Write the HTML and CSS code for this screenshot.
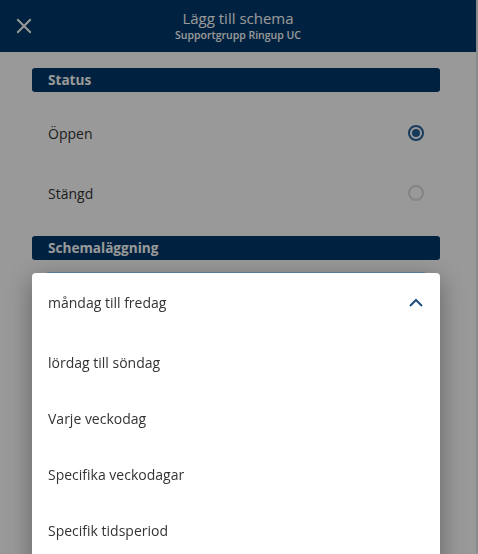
FILE: index.html
```html
<!DOCTYPE html>
<html lang="sv">
<head>
<meta charset="utf-8">
<title>Lägg till schema</title>
<link rel="stylesheet" href="styles.css">
</head>
<body>
<div class="page">
  <header class="topbar">
    <button class="close" aria-label="Stäng">
      <svg width="16" height="16" viewBox="0 0 16 16"><path d="M2 2 L14 14 M14 2 L2 14" stroke="#fff" stroke-width="2" stroke-linecap="square" fill="none"/></svg>
    </button>
    <div class="titles">
      <div class="title">Lägg till schema</div>
      <div class="subtitle">Supportgrupp Ringup UC</div>
    </div>
  </header>

  <main class="content">
    <section class="section">
      <h2 class="section-head">Status</h2>
      <div class="options">
        <label class="option"><span>Öppen</span><span class="radio checked"></span></label>
        <label class="option"><span>Stängd</span><span class="radio"></span></label>
      </div>
    </section>
    <section class="section">
      <h2 class="section-head">Schemaläggning</h2>
      <div class="field"></div>
    </section>
  </main>
</div>

<div class="scrollbar"></div>
<div class="scrim"></div>

<div class="menu">
  <div class="menu-current">
    <span>måndag till fredag</span>
    <svg class="chevron" width="14" height="9" viewBox="0 0 14 9"><path d="M1 8 L7 2 L13 8" stroke="#1f4f7c" stroke-width="2" fill="none"/></svg>
  </div>
  <ul class="menu-list">
    <li>lördag till söndag</li>
    <li>Varje veckodag</li>
    <li>Specifika veckodagar</li>
    <li>Specifik tidsperiod</li>
  </ul>
</div>
</body>
</html>
```

FILE: styles.css
```css
* { box-sizing: border-box; }
html, body { margin: 0; padding: 0; height: 100%; }
body {
  font-family: "Open Sans", "Noto Sans", sans-serif;
  background: #fff;
  color: #333;
  overflow: hidden;
}
.page { width: 476px; }
.topbar {
  height: 52px;
  background: #003a6b;
  color: #fff;
  display: flex;
  align-items: center;
}
.close {
  background: none;
  border: 0;
  padding: 0;
  margin-left: 16px;
  width: 16px;
  height: 16px;
  display: flex;
}
.titles {
  flex: 1;
  text-align: center;
  margin-right: 32px;
  margin-top: -2px;
}
.title { font-size: 15px; line-height: 20px; }
.subtitle { font-size: 10.5px; line-height: 14px; font-weight: 600; }

.content { padding: 16px 36px 0 32px; }
.section-head {
  margin: 0;
  height: 24px;
  line-height: 24px;
  background: #003a6b;
  color: #fff;
  font-size: 13.6px;
  font-weight: 700;
  padding-left: 16px;
  border-radius: 3px;
}
.options { padding: 11px 0 13px; }
.option {
  height: 60px;
  display: flex;
  align-items: center;
  justify-content: space-between;
  padding: 0 16px;
  font-size: 14px;
  color: #333;
}
.radio {
  width: 16px;
  height: 16px;
  border-radius: 50%;
  border: 2px solid #dcdcdc;
  display: flex;
  align-items: center;
  justify-content: center;
}
.radio.checked { border-color: #26619a; }
.radio.checked::after {
  content: "";
  width: 8px;
  height: 8px;
  border-radius: 50%;
  background: #26619a;
}
.field { height: 60px; }

.scrollbar {
  position: fixed;
  top: 0;
  right: 0;
  bottom: 0;
  width: 2px;
  background: #e4e8ec;
}
.scrim {
  position: fixed;
  inset: 0;
  background: rgba(0, 0, 0, 0.4);
}

.menu {
  position: absolute;
  left: 32px;
  top: 273px;
  width: 408px;
  height: 300px;
  background: #fff;
  border-radius: 4px;
  box-shadow: 0 6px 24px rgba(0, 0, 0, 0.35);
  font-size: 14px;
  color: #333;
}
.menu::before {
  content: "";
  position: absolute;
  left: 15px;
  right: 15px;
  top: -1px;
  height: 1px;
  background: #587a98;
}
.menu-current {
  height: 58px;
  display: flex;
  align-items: center;
  justify-content: space-between;
  padding: 0 17px 0 16px;
}
.chevron { display: block; }
.menu-list {
  list-style: none;
  margin: 0;
  padding: 3px 0 0;
}
.menu-list li {
  height: 56px;
  display: flex;
  align-items: center;
  padding-left: 16px;
}
```
